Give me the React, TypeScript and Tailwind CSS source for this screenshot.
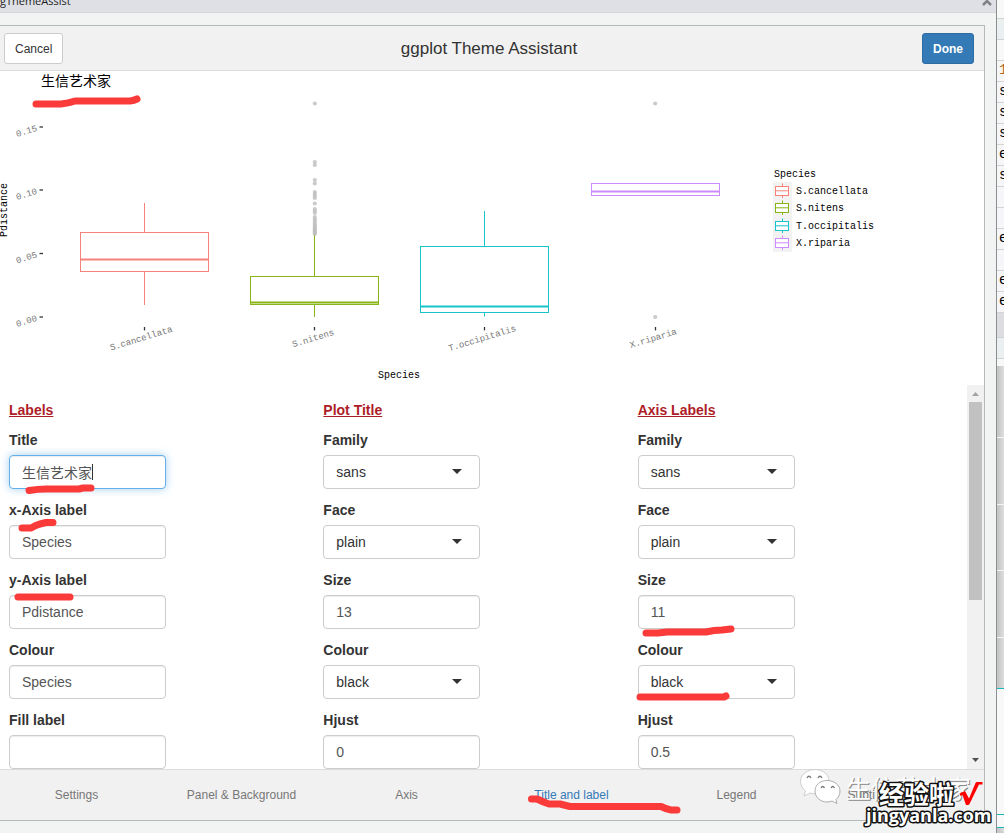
import { useState } from "react";

type Field = {
  id: string;
  label: string;
  value: string;
  kind: "text" | "number" | "select";
  active?: boolean;
};

const columns: { title: string; fields: Field[] }[] = [
  {
    title: "Labels",
    fields: [
      { id: "title", label: "Title", value: "生信艺术家", kind: "text", active: true },
      { id: "xlab", label: "x-Axis label", value: "Species", kind: "text" },
      { id: "ylab", label: "y-Axis label", value: "Pdistance", kind: "text" },
      { id: "colour", label: "Colour", value: "Species", kind: "text" },
      { id: "fill", label: "Fill label", value: "", kind: "text" },
    ],
  },
  {
    title: "Plot Title",
    fields: [
      { id: "pt-family", label: "Family", value: "sans", kind: "select" },
      { id: "pt-face", label: "Face", value: "plain", kind: "select" },
      { id: "pt-size", label: "Size", value: "13", kind: "number" },
      { id: "pt-colour", label: "Colour", value: "black", kind: "select" },
      { id: "pt-hjust", label: "Hjust", value: "0", kind: "number" },
    ],
  },
  {
    title: "Axis Labels",
    fields: [
      { id: "al-family", label: "Family", value: "sans", kind: "select" },
      { id: "al-face", label: "Face", value: "plain", kind: "select" },
      { id: "al-size", label: "Size", value: "11", kind: "number" },
      { id: "al-colour", label: "Colour", value: "black", kind: "select" },
      { id: "al-hjust", label: "Hjust", value: "0.5", kind: "number" },
    ],
  },
];

const tabs = [
  "Settings",
  "Panel & Background",
  "Axis",
  "Title and label",
  "Legend",
  "Subtitle and Caption",
];

// lo/hi are whisker ends, q1/q3 the hinges, all in plot pixels
const boxes = [
  { name: "S.cancellata", color: "#F8827A", x: 144.5, tx: 142, hi: 203, q3: 232.5, med: 259.5, q1: 271.5, lo: 305 },
  { name: "S.nitens", color: "#87B516", x: 314.5, tx: 314, hi: 235, q3: 276.5, med: 302.5, q1: 304.5, lo: 317 },
  { name: "T.occipitalis", color: "#18C4C9", x: 484.5, tx: 483, hi: 211, q3: 246.5, med: 306.5, q1: 312.5, lo: 316.5 },
  { name: "X.riparia", color: "#CC8BFF", x: 655.5, tx: 654, hi: 183.5, q3: 183.5, med: 191.5, q1: 195.5, lo: 195.5 },
];

const outliers = [
  103.5, 162, 165, 180, 183.5, 192, 194, 196, 198, 203.5, 209, 211, 213, 217,
  219, 221, 223, 225, 226, 228, 229, 230, 231, 232, 233, 234,
];

const yTicks = [
  { label: "0.15", y: 127 },
  { label: "0.10", y: 190 },
  { label: "0.05", y: 253.5 },
  { label: "0.00", y: 317 },
];

function BoxPlot() {
  return (
    <svg
      viewBox="-6 71 990 314"
      className="block w-full bg-white font-['Liberation_Mono','Noto_Sans_CJK_SC',monospace]"
      role="img"
      aria-label="Pdistance by Species"
    >
      <text x="41" y="86" fontSize="14" className="font-['Noto_Sans_CJK_SC',sans-serif]">
        生信艺术家
      </text>
      {yTicks.map((t) => (
        <g key={t.label}>
          <text fontSize="9" fill="#777" transform={`translate(17 ${t.y + 10}) rotate(-17)`}>
            {t.label}
          </text>
          <path d={`M39.5 ${t.y}h3.5`} stroke="#333" strokeWidth="1.3" />
        </g>
      ))}
      {outliers.map((y) => (
        <circle key={y} cx="314.8" cy={y} r="2.1" fill="#bebebe" fillOpacity="0.8" />
      ))}
      <circle cx="655.2" cy="103.5" r="2.1" fill="#cacaca" />
      <circle cx="655.2" cy="317" r="2.1" fill="#cacaca" />
      {boxes.map((b) => (
        <g key={b.name}>
          <g stroke={b.color} fill="none">
            <path d={`M${b.x} ${b.hi}V${b.q3}M${b.x} ${b.q1}V${b.lo}`} />
            <rect x={b.x - 64} y={b.q3} width="128" height={b.q1 - b.q3} />
            <path d={`M${b.x - 64} ${b.med}h128`} strokeWidth="1.8" />
          </g>
          <path d={`M${b.x} 327v3.4`} stroke="#333" strokeWidth="1.3" />
          <text
            fontSize="9"
            fill="#777"
            textAnchor="middle"
            transform={`translate(${b.tx} 341) rotate(-17)`}
          >
            {b.name}
          </text>
        </g>
      ))}
      <text fontSize="10" transform="translate(7 237) rotate(-90)">
        Pdistance
      </text>
      <text x="378" y="378" fontSize="10">
        Species
      </text>

      {/* legend */}
      <text x="774" y="177" fontSize="10">
        Species
      </text>
      <rect x="773" y="182" width="19" height="70" fill="#f2f2f2" />
      {boxes.map((b, i) => {
        const y = [186.5, 203.5, 221.5, 238.5][i];
        return (
          <g key={b.name}>
            <g stroke={b.color}>
              <rect x="775.5" y={y} width="13" height="9" fill="#fff" />
              <path d={`M775.5 ${y + 4.3}h13M782.5 ${y - 3}v3M782.5 ${y + 9}v2.5`} />
            </g>
            <text x="796" y={y + 7.5} fontSize="10">
              {b.name}
            </text>
          </g>
        );
      })}
    </svg>
  );
}

function FormField({ field }: { field: Field }) {
  const [value, setValue] = useState(field.value);
  const base =
    "block h-[34px] w-full rounded border bg-white px-3 text-[14px] leading-5 outline-none";
  return (
    <div className="w-1/2">
      <label htmlFor={field.id} className="mb-[5px] block text-[14px] font-bold leading-5">
        {field.label}
      </label>
      <div className="relative">
        {field.kind === "select" ? (
          <>
            <select
              id={field.id}
              defaultValue={field.value}
              className={`${base} appearance-none border-[#ccc] text-[#333]`}
            >
              <option>{field.value}</option>
            </select>
            <svg
              viewBox="0 0 10 5"
              className="pointer-events-none absolute right-[18px] top-[14px] h-[5px] w-[10px]"
            >
              <path d="M0 0h10L5 5z" fill="#333" />
            </svg>
          </>
        ) : (
          <input
            id={field.id}
            type={field.kind}
            step="any"
            value={value}
            onChange={(e) => setValue(e.target.value)}
            className={`${base} text-[#555] ${
              field.active
                ? "border-[#66afe9] shadow-[inset_0_1px_1px_rgba(0,0,0,0.075),0_0_8px_rgba(102,175,233,0.6)]"
                : "border-[#ccc] shadow-[inset_0_1px_1px_rgba(0,0,0,0.075)]"
            }`}
          />
        )}
        {field.active && <span className="absolute left-[83px] top-[9px] h-4 w-px bg-[#333]" />}
      </div>
    </div>
  );
}

function ScrollBar() {
  return (
    <div className="flex w-[17px] shrink-0 flex-col items-center bg-[#f1f1f1]">
      <svg viewBox="0 0 17 17" className="h-[17px] w-[17px]">
        <path d="M5 11h7L8.5 7z" fill="#a3a3a3" />
      </svg>
      <div className="flex w-full flex-1 flex-col px-[2px]">
        <div className="h-[198px] bg-[#c1c1c1]" />
      </div>
      <svg viewBox="0 0 17 17" className="h-[17px] w-[17px]">
        <path d="M5 6h7L8.5 10z" fill="#505050" />
      </svg>
    </div>
  );
}

const codeRows = ["1", "s", "s", "s", "e", "s", "", "", "e", "", "e", "e"];

// Sliver of the editor window that shows to the right of the dialog
function EditorEdge() {
  return (
    <div className="flex w-[7px] shrink-0 flex-col overflow-hidden bg-[#e0e0e0] font-['Liberation_Mono',monospace] shadow-[inset_4px_0_4px_rgba(0,0,0,0.12)]">
      <div className="h-[19px] border-b border-[#d0d3d4] bg-[#f8f8f8]" />
      <div className="h-[21px] border-b border-[#d0d3d4] bg-[#eaeff0]" />
      <div className="h-[21px] border-b border-[#d0d3d4] bg-[#f8f8f8]" />
      {codeRows.map((c, i) => (
        <div
          key={i}
          className={`h-[21px] border-b border-[#d4d4d4] bg-[#f6f6f8] pl-[2px] text-[14px] leading-[18px] ${
            c === "1" ? "text-[#b5651d]" : "text-black"
          }`}
        >
          {c}
        </div>
      ))}
      <div className="h-[24px] bg-[#dcdce1]" />
      <div className="h-[22px] border-y border-[#d0d3d4] bg-[#eaeff0]" />
      <div className="h-[7px] bg-[#f8f8f8]" />
      <div className="h-[72px] border-b border-[#f6f6f6]" />
      <div className="h-[67px] border-b border-[#f6f6f6]" />
      <div className="h-[66px] border-b border-[#f6f6f6]" />
      <div className="h-[67px] border-b border-[#f6f6f6]" />
      <div className="h-[50px]" />
      <div className="h-[127px] border-y border-[#19b8bd] bg-[#f8f8f8]" />
      <div className="h-[13px] border-b border-[#19b8bd] bg-[#f8f8f8]" />
    </div>
  );
}

function Markup() {
  return (
    <svg
      className="pointer-events-none absolute inset-0 h-full w-full"
      fill="none"
      stroke="#fb3a3a"
      strokeWidth="7"
      strokeLinecap="round"
      strokeLinejoin="round"
    >
      <path d="M36 104H61Q68 103.500 75 101H130Q134 100.500 137 99" />
      <path d="M29 490.500Q38 489 46 489H79L83 488H91" />
      <path d="M22 528H31Q36 525 40 524L46 522.500H53" />
      <path d="M18 597H70" />
      <path d="M646 633H658L667 632H706Q714 630 722 630L731 629" />
      <path d="M640 697H724L726 696" />
      <path d="M531.500 799H537Q543 802 549 804H560L570 806.500H661Q667 809.500 671 810H677" />
    </svg>
  );
}

function Watermark() {
  return (
    <svg
      viewBox="0 0 200 70"
      className="pointer-events-none absolute right-1 bottom-0 h-[70px] w-[200px]"
    >
      <g fill="#fff" stroke="#999" strokeWidth="0.8">
        <path d="M15 6.500C6.500 6.500.5 12 .5 18.500c0 4 2 7 5 9.500l-1.500 5 6-3c8 2.500 19-1 19-11.500 0-7-6-12-14-12z" stroke="#c4c4c4" />
        <path d="M27 17.500c-7 0-12 4.500-12 10.500s5 11 12 11c2 0 3.500-.5 5-1l5 2.500-1-4c2.500-2 4-5 4-8.500 0-6-6-10.500-13-10.500z" />
        <path d="M7 15q2-3.500 4 0M18 15q2-3.500 4 0M21 25q1.700-3 3.500 0M31 25q1.700-3 3.500 0" fill="none" stroke="#777" strokeWidth="1.300" />
      </g>
      <g className="font-['Noto_Sans_CJK_SC',sans-serif]" fontSize="25">
        <text x="47" y="36" fill="#888">
          生信艺术家
        </text>
        <text x="46" y="35" fill="#fff">
          生信艺术家
        </text>
      </g>
      <g fill="#fff" stroke="#111" strokeWidth="3" strokeLinejoin="round" paintOrder="stroke" fontWeight="bold">
        <text x="79" y="41" fontSize="25" className="font-['Noto_Sans_CJK_SC',sans-serif]">
          经验啦
        </text>
        <text x="66" y="59" fontSize="18" className="font-['Open_Sans',sans-serif]">
          jingyanla.com
        </text>
      </g>
      <path d="M159.500 30.500L165 28l4 7.500L175.500 20q.5-1 1.500-1h5.500v2.500H179L169.500 41q-.5 1-1.500 1h-2l-3.500-10-2 1z" fill="#f00" />
    </svg>
  );
}

export default function App() {
  const [active, setActive] = useState("Title and label");
  return (
    <div className="relative flex min-h-screen overflow-hidden bg-[#f2f4f4] font-['Liberation_Sans','Noto_Sans_CJK_SC',sans-serif] text-[14px] text-[#333]">
      <div className="-ml-[6px] flex min-w-0 flex-1 flex-col border-r border-[#8c8f90] bg-[#f2f4f4]">
        <div className="flex h-[13px] items-end justify-between overflow-hidden border-b border-[#d4d6d9] bg-[#dfe0e5] pb-[3px] pr-1">
          <span className="font-['Open_Sans',sans-serif] text-[11px] leading-4 text-[#222]">
            ggThemeAssist
          </span>
          <button type="button" aria-label="Close" className="h-[10px] w-[10px]">
            <svg viewBox="0 0 10 10" className="h-full w-full">
              <path d="M1 6l4-4 4 4" fill="none" stroke="#808285" strokeWidth="2.500" />
            </svg>
          </button>
        </div>

        <div className="mb-3 mr-[11px] mt-3 border-y border-r border-[#b4b9ba] bg-white">
          <header className="flex items-center justify-between border-b border-[#ddd] bg-[#f1f1f1] px-[10px] pb-[6px] pt-[7px]">
            <div className="flex flex-1 justify-start">
              <button
                type="button"
                className="h-[31px] rounded-[3px] border border-[#ccc] bg-white px-[10px] text-[12px] text-[#333]"
              >
                Cancel
              </button>
            </div>
            <h1 className="text-[17px] leading-5">ggplot Theme Assistant</h1>
            <div className="flex flex-1 justify-end">
              <button
                type="button"
                className="h-[31px] rounded-[3px] border border-[#2e6da4] bg-[#337ab7] px-[10px] text-[12px] font-bold text-white"
              >
                Done
              </button>
            </div>
          </header>

          <BoxPlot />

          <div className="flex">
            <form className="grid flex-1 grid-cols-3 px-[15px] pt-[15px]">
              {columns.map((col) => (
                <section key={col.title}>
                  <h2 className="mb-[10px] text-[14px] font-bold leading-5 text-[#ad1d28] underline">
                    {col.title}
                  </h2>
                  <div className="flex flex-col gap-[11px]">
                    {col.fields.map((f) => (
                      <FormField key={f.id} field={f} />
                    ))}
                  </div>
                </section>
              ))}
            </form>
            <ScrollBar />
          </div>

          <nav className="grid grid-cols-6 border-t border-[#ddd] bg-[#f1f1f1]">
            {tabs.map((t) => (
              <button
                key={t}
                type="button"
                onClick={() => setActive(t)}
                className={`h-[50px] whitespace-nowrap text-[12px] ${
                  t === active ? "text-[#337ab7]" : "text-[#777]"
                }`}
              >
                {t}
              </button>
            ))}
          </nav>
        </div>
      </div>
      <EditorEdge />
      <Markup />
      <Watermark />
    </div>
  );
}
